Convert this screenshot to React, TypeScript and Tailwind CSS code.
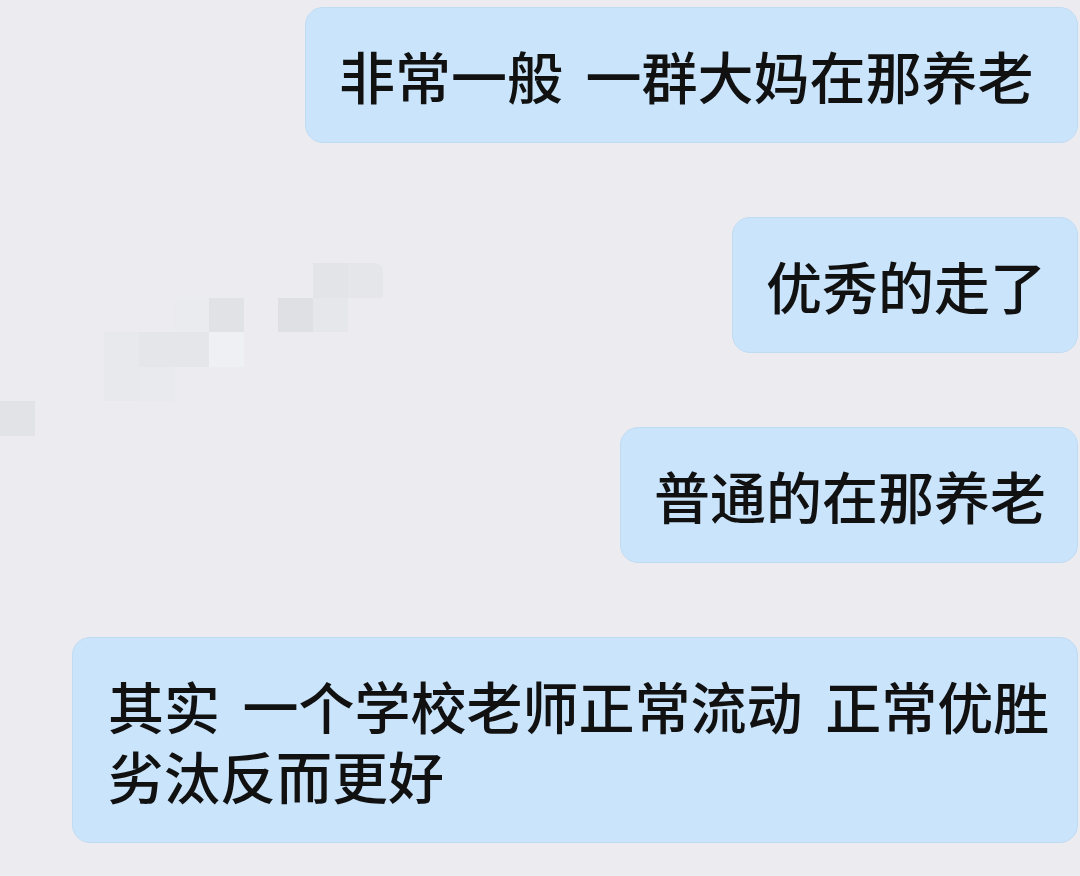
import React from "react";

const font = {
  fontFamily: '"Noto Sans CJK SC", "Noto Sans", sans-serif',
};

function Bubble({ w, children }: { w: string; children: React.ReactNode }) {
  return (
    <div
      className={`${w} rounded-[18px] bg-[#c9e4fb] border border-[#c0dcf3] px-[33px] py-[32px] text-[56px] font-medium leading-[70px] text-[#111111] [word-spacing:10px] whitespace-nowrap`}
      style={font}
    >
      {children}
    </div>
  );
}

const E = "";
const mosaic: string[][] = [
  [E, E, E, E, E, E, E, E, E, "bg-[#e3e4e8]", "bg-[#e5e6ea] rounded-tr-[8px]"],
  [E, E, E, E, E, "bg-[#eaebef]", "bg-[#e1e2e6]", E, "bg-[#dfe0e4]", "bg-[#e6e7eb]", E],
  [E, E, E, "bg-[#e8e9ed]", "bg-[#e5e6ea]", "bg-[#e5e6ea]", "bg-[#eff0f3]", E, E, E, E],
  [E, E, E, "bg-[#e8e9ed]", "bg-[#e9eaee]", E, E, E, E, E, E],
  ["bg-[#e2e3e7]", E, E, E, E, E, E, E, E, E, E],
];

export default function App() {
  return (
    <div className="relative w-[1080px] h-[876px] overflow-hidden bg-[#ececf0]">
      {/* pixelated watermark mosaic */}
      <div className="absolute left-0 top-[263px] grid grid-cols-[repeat(11,34.8px)] grid-rows-[repeat(5,34.6px)]">
        {mosaic.flatMap((row, r) =>
          row.map((c, i) => <div key={`${r}-${i}`} className={c} />)
        )}
      </div>

      <div className="relative flex flex-col items-end gap-[74px] pt-[7px] pr-[2px]">
        <Bubble w="w-[773px]">非常一般 一群大妈在那养老</Bubble>
        <Bubble w="w-[346px]">优秀的走了</Bubble>
        <Bubble w="w-[458px]">普通的在那养老</Bubble>
        <Bubble w="w-[1006px] pl-[35px]">
          其实 一个学校老师正常流动 正常优胜
          <br />
          劣汰反而更好
        </Bubble>
      </div>
    </div>
  );
}
